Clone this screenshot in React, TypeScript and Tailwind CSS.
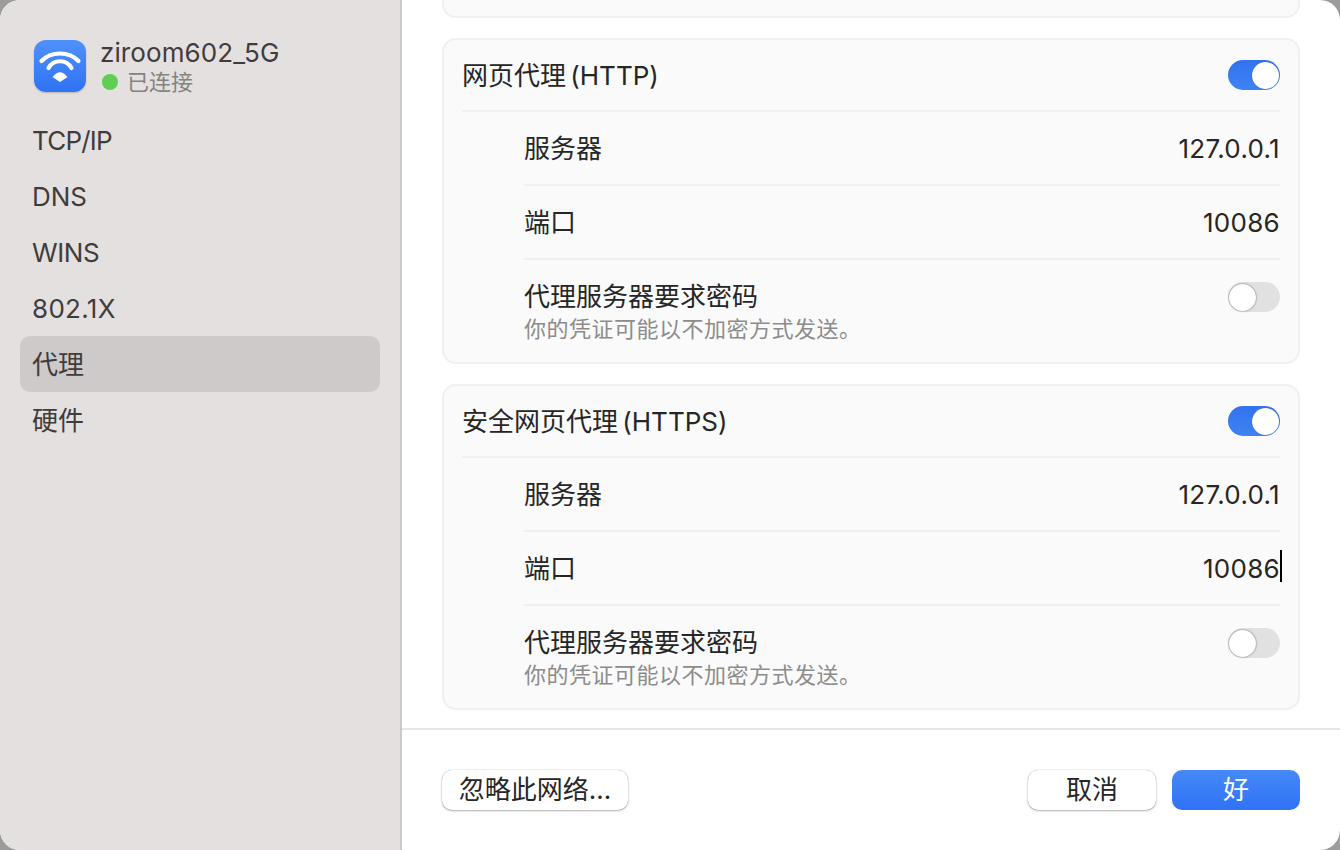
const FONT = "font-['Inter','Noto_Sans_CJK_SC',sans-serif]";

function Toggle({ on }: { on: boolean }) {
  if (on) {
    return (
      <div className="flex h-[30px] w-[52px] items-center justify-end rounded-full bg-gradient-to-b from-[#3273ee] to-[#3f82f5] pr-[1px]">
        <div className="h-[27px] w-[27px] rounded-full bg-white shadow-[0_0_1px_rgba(0,0,0,0.3)]" />
      </div>
    );
  }
  return (
    <div className="flex h-[30px] w-[52px] items-center justify-start rounded-full bg-[#e1e1e1] pl-[1px]">
      <div className="h-[27px] w-[27px] rounded-full bg-white shadow-[0_0_2px_rgba(0,0,0,0.6)]" />
    </div>
  );
}

function ValueRow({ label, value, caret }: { label: string; value: string; caret?: boolean }) {
  return (
    <div className="flex h-[74px] items-center justify-between border-b-2 border-[#f0f0f0] text-[26px] text-[#262626]">
      <span>{label}</span>
      <span className="relative tracking-[0.3px]">
        {value}
        {caret && <span className="absolute right-[-2px] top-[1px] h-[32px] w-[2px] bg-black" />}
      </span>
    </div>
  );
}

function ProxyCard({ title, caret }: { title: string; caret?: boolean }) {
  return (
    <div className="rounded-[14px] border-2 border-[#f0f0f0] bg-[#fafafa] pl-[18px] pr-[18px]">
      <div className="flex h-[72px] items-center justify-between border-b-2 border-[#f0f0f0] text-[26px] text-[#262626]">
        <span className="[word-spacing:-3px]">{title}</span>
        <Toggle on />
      </div>
      <div className="pl-[62px]">
        <ValueRow label="服务器" value="127.0.0.1" />
        <ValueRow label="端口" value="10086" caret={caret} />
        <div className="flex h-[102px] items-center justify-between pt-[2px]">
          <div>
            <div className="text-[26px] leading-[32px] text-[#262626]">代理服务器要求密码</div>
            <div className="mt-[2px] text-[22px] leading-[28px] tracking-[0.5px] text-[#8c8c8c]">你的凭证可能以不加密方式发送。</div>
          </div>
          <div className="-mt-[30px]">
            <Toggle on={false} />
          </div>
        </div>
      </div>
    </div>
  );
}

function WifiIcon() {
  return (
    <div className="h-[52px] w-[52px] rounded-[12px] bg-gradient-to-b from-[#4f91fb] to-[#2f72f3] shadow-[0_1px_2px_rgba(0,0,0,0.2)]">
      <svg width="52" height="52" viewBox="0 0 52 52" fill="none">
        <path d="M7.5 21C17 11 35 11 44.5 21" stroke="white" strokeWidth="4.2" strokeLinecap="round" />
        <path d="M14.5 28C19.5 19 32.5 19 37.5 28" stroke="white" strokeWidth="4.2" strokeLinecap="round" />
        <path d="M18.5 37Q26 27.5 33.5 37L26 42Z" fill="white" />
      </svg>
    </div>
  );
}

const NAV = [
  { label: "TCP/IP", cls: "tracking-[-0.8px]" },
  { label: "DNS", cls: "" },
  { label: "WINS", cls: "tracking-[-0.4px]" },
  { label: "802.1X", cls: "tracking-[0.3px]" },
  { label: "代理", cls: "bg-[#cfcaca]" },
  { label: "硬件", cls: "" },
];

export default function App() {
  return (
    <div className={`${FONT} h-[850px] w-[1340px] overflow-hidden bg-[#9c9c9c]`}>
      <div className="flex h-full w-full overflow-hidden rounded-[20px] bg-white">
        <aside className="h-full w-[402px] shrink-0 border-r-2 border-[#cfcaca] bg-[#e4e0df] pl-[20px] pr-[20px] pt-[40px]">
          <div className="flex items-start pl-[14px]">
            <WifiIcon />
            <div className="ml-[14px]">
              <div className="-mt-[3px] text-[26px] leading-[32px] tracking-[0.1px] text-[#3f3c3b]">ziroom602_5G</div>
              <div className="flex items-center text-[22px] leading-[26px] text-[#85827f]">
                <span className="ml-[2px] h-[16px] w-[16px] rounded-full bg-[#62cd54]" />
                <span className="ml-[9px]">已连接</span>
              </div>
            </div>
          </div>
          <nav className="mt-[17px]">
            {NAV.map((item) => (
              <div
                key={item.label}
                className={`flex h-[56px] items-center rounded-[10px] pl-[12px] text-[26px] text-[#3f3c3b] ${item.cls}`}
              >
                {item.label}
              </div>
            ))}
          </nav>
        </aside>

        <main className="flex min-w-0 flex-1 flex-col">
          <div className="h-[728px] px-[40px]">
            <div className="h-[18px] rounded-b-[14px] border-x-2 border-b-2 border-[#f0f0f0] bg-[#fafafa]" />
            <div className="mt-[20px] flex flex-col gap-[20px]">
              <ProxyCard title="网页代理 (HTTP)" />
              <ProxyCard title="安全网页代理 (HTTPS)" caret />
            </div>
          </div>
          <div className="flex flex-1 items-start justify-between border-t-2 border-[#e6e6e6] pl-[40px] pr-[40px] pt-[40px]">
            <button className="h-[40px] w-[186px] rounded-[10px] bg-white pb-[2px] text-[26px] text-[#262626] shadow-[0_0_1px_rgba(0,0,0,0.4),0_1px_2px_rgba(0,0,0,0.3)]">
              忽略此网络...
            </button>
            <div className="flex gap-[16px]">
              <button className="h-[40px] w-[128px] rounded-[10px] bg-white pb-[2px] text-[26px] text-[#262626] shadow-[0_0_1px_rgba(0,0,0,0.4),0_1px_2px_rgba(0,0,0,0.3)]">
                取消
              </button>
              <button className="h-[40px] w-[128px] rounded-[10px] bg-gradient-to-b from-[#4589f8] to-[#3072f5] pb-[2px] text-[26px] text-white">
                好
              </button>
            </div>
          </div>
        </main>
      </div>
    </div>
  );
}
